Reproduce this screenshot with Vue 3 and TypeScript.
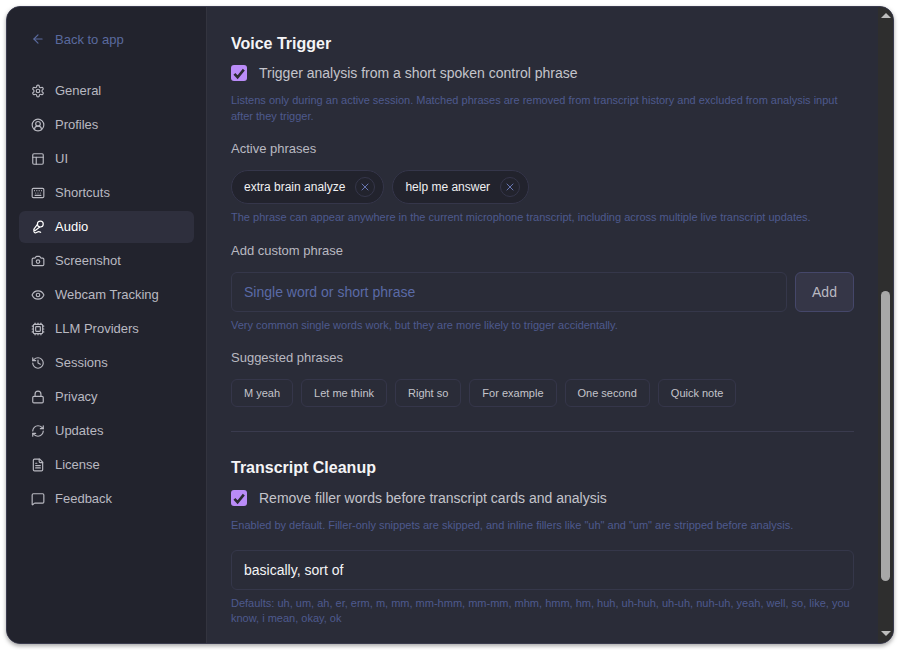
<script setup lang="ts">
import { ref } from 'vue'

interface NavItem { label: string; paths: string[]; active?: boolean }

const circle = (cx: number, cy: number, r: number) =>
  `M${cx - r} ${cy}a${r} ${r} 0 1 0 ${2 * r} 0a${r} ${r} 0 1 0 ${-2 * r} 0`

const nav: NavItem[] = [
  { label: 'General', paths: ['M12.22 2h-.44a2 2 0 0 0-2 2v.18a2 2 0 0 1-1 1.73l-.43.25a2 2 0 0 1-2 0l-.15-.08a2 2 0 0 0-2.73.73l-.22.38a2 2 0 0 0 .73 2.73l.15.1a2 2 0 0 1 1 1.72v.51a2 2 0 0 1-1 1.74l-.15.09a2 2 0 0 0-.73 2.73l.22.38a2 2 0 0 0 2.73.73l.15-.08a2 2 0 0 1 2 0l.43.25a2 2 0 0 1 1 1.73V20a2 2 0 0 0 2 2h.44a2 2 0 0 0 2-2v-.18a2 2 0 0 1 1-1.73l.43-.25a2 2 0 0 1 2 0l.15.08a2 2 0 0 0 2.73-.73l.22-.39a2 2 0 0 0-.73-2.73l-.15-.08a2 2 0 0 1-1-1.74v-.5a2 2 0 0 1 1-1.74l.15-.09a2 2 0 0 0 .73-2.73l-.22-.38a2 2 0 0 0-2.73-.73l-.15.08a2 2 0 0 1-2 0l-.43-.25a2 2 0 0 1-1-1.73V4a2 2 0 0 0-2-2z', circle(12, 12, 3)] },
  { label: 'Profiles', paths: ['M18 20a6 6 0 0 0-12 0', circle(12, 10, 4), circle(12, 12, 10)] },
  { label: 'UI', paths: ['M5 3h14a2 2 0 0 1 2 2v14a2 2 0 0 1-2 2H5a2 2 0 0 1-2-2V5a2 2 0 0 1 2-2z', 'M3 9h18', 'M9 21V9'] },
  { label: 'Shortcuts', paths: ['M10 8h.01', 'M12 12h.01', 'M14 8h.01', 'M16 12h.01', 'M18 8h.01', 'M6 8h.01', 'M7 16h10', 'M8 12h.01', 'M4 4h16a2 2 0 0 1 2 2v12a2 2 0 0 1-2 2H4a2 2 0 0 1-2-2V6a2 2 0 0 1 2-2z'] },
  { label: 'Audio', paths: ['m11 7.601-5.994 8.19a1 1 0 0 0 .1 1.298l.817.818a1 1 0 0 0 1.314.087L15.09 12', 'M16.5 21.174C15.5 20.5 14.372 20 13 20c-2.058 0-3.928 2.356-6 2-2.072-.356-2.775-3.369-1.5-4.5', circle(16, 7, 5)] },
  { label: 'Screenshot', paths: ['M13.997 4a2 2 0 0 1 1.76 1.05l.486.9A2 2 0 0 0 18.003 7H20a2 2 0 0 1 2 2v9a2 2 0 0 1-2 2H4a2 2 0 0 1-2-2V9a2 2 0 0 1 2-2h1.997a2 2 0 0 0 1.759-1.048l.489-.904A2 2 0 0 1 10.004 4z', circle(12, 13, 3)] },
  { label: 'Webcam Tracking', paths: ['M2.062 12.348a1 1 0 0 1 0-.696 10.75 10.75 0 0 1 19.876 0 1 1 0 0 1 0 .696 10.75 10.75 0 0 1-19.876 0', circle(12, 12, 3)] },
  { label: 'LLM Providers', paths: ['M12 20v2', 'M12 2v2', 'M17 20v2', 'M17 2v2', 'M2 12h2', 'M2 17h2', 'M2 7h2', 'M20 12h2', 'M20 17h2', 'M20 7h2', 'M7 20v2', 'M7 2v2', 'M6 4h12a2 2 0 0 1 2 2v12a2 2 0 0 1-2 2H6a2 2 0 0 1-2-2V6a2 2 0 0 1 2-2z', 'M9 8h6a1 1 0 0 1 1 1v6a1 1 0 0 1-1 1H9a1 1 0 0 1-1-1V9a1 1 0 0 1 1-1z'] },
  { label: 'Sessions', paths: ['M3 12a9 9 0 1 0 9-9 9.75 9.75 0 0 0-6.74 2.74L3 8', 'M3 3v5h5', 'M12 7v5l4 2'] },
  { label: 'Privacy', paths: ['M5 11h14a2 2 0 0 1 2 2v7a2 2 0 0 1-2 2H5a2 2 0 0 1-2-2v-7a2 2 0 0 1 2-2z', 'M7 11V7a5 5 0 0 1 10 0v4'] },
  { label: 'Updates', paths: ['M3 12a9 9 0 0 1 9-9 9.75 9.75 0 0 1 6.74 2.74L21 8', 'M21 3v5h-5', 'M21 12a9 9 0 0 1-9 9 9.75 9.75 0 0 1-6.74-2.74L3 16', 'M8 16H3v5'] },
  { label: 'License', paths: ['M15 2H6a2 2 0 0 0-2 2v16a2 2 0 0 0 2 2h12a2 2 0 0 0 2-2V7Z', 'M14 2v4a2 2 0 0 0 2 2h4', 'M10 9H8', 'M16 13H8', 'M16 17H8'] },
  { label: 'Feedback', paths: ['M22 17a2 2 0 0 1-2 2H6.828a2 2 0 0 0-1.414.586l-2.202 2.202A.71.71 0 0 1 2 21.286V5a2 2 0 0 1 2-2h16a2 2 0 0 1 2 2z'] },
]
nav[4].active = true

const activePhrases = ['extra brain analyze', 'help me answer']
const suggested = ['M yeah', 'Let me think', 'Right so', 'For example', 'One second', 'Quick note']

const phrase = ref('')
const fillers = ref('basically, sort of')
</script>

<template>
  <div class="stage">
    <div class="window">
      <aside class="sidebar">
        <a class="back">
          <svg class="icon" viewBox="0 0 24 24"><path d="m12 19-7-7 7-7" /><path d="M19 12H5" /></svg>
          <span>Back to app</span>
        </a>
        <nav class="nav">
          <a v-for="item in nav" :key="item.label" class="nav-item" :class="{ active: item.active }">
            <svg class="icon" viewBox="0 0 24 24"><path v-for="d in item.paths" :key="d" :d="d" /></svg>
            <span class="nav-label">{{ item.label }}</span>
          </a>
        </nav>
      </aside>

      <main class="main">
        <section class="section">
          <h2>Voice Trigger</h2>
          <div class="check">
            <span class="box" role="checkbox" aria-checked="true">
              <svg viewBox="0 0 16 16"><path d="M3.4 8.8l3.2 3.4l6.2-7.6" /></svg>
            </span>
            <span>Trigger analysis from a short spoken control phrase</span>
          </div>
          <p class="help first">Listens only during an active session. Matched phrases are removed from transcript history and excluded from analysis input after they trigger.</p>

          <div class="label l-active">Active phrases</div>
          <div class="chips">
            <div v-for="p in activePhrases" :key="p" class="chip">
              <span>{{ p }}</span>
              <button class="chip-x" type="button" aria-label="Remove">
                <svg viewBox="0 0 24 24"><path d="M18 6 6 18" /><path d="m6 6 12 12" /></svg>
              </button>
            </div>
          </div>
          <p class="help h-chips">The phrase can appear anywhere in the current microphone transcript, including across multiple live transcript updates.</p>

          <div class="label l-custom">Add custom phrase</div>
          <div class="add-row">
            <input v-model="phrase" class="field" type="text" placeholder="Single word or short phrase" />
            <button class="add" type="button">Add</button>
          </div>
          <p class="help h-add">Very common single words work, but they are more likely to trigger accidentally.</p>

          <div class="label l-suggest">Suggested phrases</div>
          <div class="suggest">
            <button v-for="s in suggested" :key="s" class="suggest-btn" type="button">{{ s }}</button>
          </div>
        </section>

        <hr class="divider" />

        <section class="section">
          <h2>Transcript Cleanup</h2>
          <div class="check second">
            <span class="box" role="checkbox" aria-checked="true">
              <svg viewBox="0 0 16 16"><path d="M3.4 8.8l3.2 3.4l6.2-7.6" /></svg>
            </span>
            <span>Remove filler words before transcript cards and analysis</span>
          </div>
          <p class="help first">Enabled by default. Filler-only snippets are skipped, and inline fillers like "uh" and "um" are stripped before analysis.</p>
          <input v-model="fillers" class="field full" type="text" />
          <p class="help h-add">Defaults: uh, um, ah, er, erm, m, mm, mm-hmm, mm-mm, mhm, hmm, hm, huh, uh-huh, uh-uh, nuh-uh, yeah, well, so, like, you know, i mean, okay, ok</p>
        </section>
      </main>

      <div class="scrollbar" aria-hidden="true">
        <span class="arrow up"></span>
        <div class="track"><div class="thumb"></div></div>
        <span class="arrow down"></span>
      </div>
    </div>
  </div>
</template>

<style>
html, body { margin: 0; background: #ffffff; }
</style>

<style scoped>
.stage {
  width: 900px;
  height: 650px;
  padding: 6px;
  box-sizing: border-box;
  font-family: "Liberation Sans", Arial, sans-serif;
}
.window {
  display: flex;
  height: 638px;
  box-sizing: border-box;
  border: 1px solid #3a3b4e;
  border-radius: 14px;
  overflow: hidden;
  background: #2a2c38;
  box-shadow: 0 2px 4px rgba(0, 0, 0, 0.35);
}
.sidebar {
  flex: 0 0 200px;
  box-sizing: border-box;
  background: #22232d;
  border-right: 1px solid #33343f;
  padding: 16px 12px 0;
}
.icon {
  width: 14px;
  height: 14px;
  flex: none;
  fill: none;
  stroke: currentColor;
  stroke-width: 2;
  stroke-linecap: round;
  stroke-linejoin: round;
}
.back {
  display: flex;
  align-items: center;
  gap: 10px;
  height: 32px;
  padding-left: 12px;
  font-size: 13px;
  color: #5a6a9e;
}
.nav {
  display: flex;
  flex-direction: column;
  gap: 2px;
  margin-top: 20px;
}
.nav-item {
  display: flex;
  align-items: center;
  gap: 10px;
  height: 32px;
  padding-left: 12px;
  border-radius: 6px;
  font-size: 13px;
  color: #b9b9c1;
}
.nav-label { padding-bottom: 1px; }
.nav-item.active {
  background: #2e2f3d;
  color: #ffffff;
}
.main {
  flex: 1;
  min-width: 0;
  overflow: hidden;
  padding: 27px 24px 0;
}
h2 {
  margin: 0;
  font-size: 16px;
  line-height: 20px;
  font-weight: 700;
  color: #f4f4f6;
}
.check {
  display: flex;
  align-items: center;
  gap: 12px;
  margin-top: 9px;
  height: 20px;
  font-size: 14px;
  color: #c4c4cb;
}
.check.second { margin-top: 10px; }
.box {
  display: block;
  flex: none;
  width: 16px;
  height: 16px;
  border-radius: 3px;
  background: #ba8cf8;
}
.box svg {
  display: block;
  width: 16px;
  height: 16px;
  fill: none;
  stroke: #2b2b33;
  stroke-width: 2.6;
}
.help {
  margin: 0;
  font-size: 11px;
  line-height: 15.4px;
  color: #4e5a8e;
}
.first { margin-top: 10.2px; }
.label {
  font-size: 13px;
  line-height: 16px;
  color: #b9b9c1;
}
.l-active { margin-top: 16.8px; }
.chips {
  display: flex;
  gap: 8px;
  margin-top: 13px;
}
.chip {
  display: flex;
  align-items: center;
  gap: 10px;
  height: 34px;
  box-sizing: border-box;
  padding: 0 8px 0 12px;
  border: 1px solid #35364a;
  border-radius: 17px;
  background: #22232d;
  font-size: 12px;
  color: #f0f0f2;
}
.chip-x {
  display: flex;
  align-items: center;
  justify-content: center;
  width: 20px;
  height: 20px;
  padding: 0;
  border: 1px solid #35364a;
  border-radius: 50%;
  background: transparent;
}
.chip-x svg {
  width: 12px;
  height: 12px;
  flex: none;
  fill: none;
  stroke: #6f7fc0;
  stroke-width: 1.8;
  stroke-linecap: round;
}
.h-chips { margin-top: 6px; }
.l-custom { margin-top: 18px; }
.add-row {
  display: flex;
  gap: 8px;
  margin-top: 13px;
}
.field {
  flex: 1;
  min-width: 0;
  height: 40px;
  box-sizing: border-box;
  padding: 0 12px;
  border: 1px solid #35374a;
  border-radius: 6px;
  background: transparent;
  font: 14px "Liberation Sans", Arial, sans-serif;
  color: #f4f4f6;
  outline: none;
}
.field::placeholder { color: #5a6aa6; opacity: 1; }
.full {
  display: block;
  width: 100%;
  margin-top: 16.8px;
}
.add {
  width: 59px;
  height: 40px;
  padding: 0;
  border: 1px solid #45476a;
  border-radius: 6px;
  background: #353647;
  font: 14px "Liberation Sans", Arial, sans-serif;
  color: #b9b9c1;
}
.h-add { margin-top: 6px; }
.l-suggest { margin-top: 16px; }
.suggest {
  display: flex;
  gap: 8px;
  margin-top: 13px;
}
.suggest-btn {
  height: 28px;
  padding: 0 12px;
  border: 1px solid #35364a;
  border-radius: 6px;
  background: transparent;
  font: 11px "Liberation Sans", Arial, sans-serif;
  color: #c4c4cb;
}
.divider {
  height: 1px;
  margin: 24px 0 26px;
  border: 0;
  background: #3a3b4e;
}
.scrollbar {
  flex: 0 0 15px;
  display: flex;
  flex-direction: column;
  background: #2e2e2e;
}
.arrow {
  flex: 0 0 15px;
  display: flex;
  justify-content: center;
  box-sizing: border-box;
}
.arrow::before {
  content: "";
  width: 0;
  height: 0;
  border-left: 5px solid transparent;
  border-right: 5px solid transparent;
}
.up { align-items: flex-start; padding-top: 6px; }
.up::before { border-bottom: 5px solid #bdbdbd; }
.down { align-items: flex-end; padding-bottom: 7px; }
.down::before { border-top: 5px solid #bdbdbd; }
.track {
  flex: 1;
  padding-top: 269px;
  display: flex;
  justify-content: center;
}
.thumb {
  width: 9px;
  height: 290px;
  border-radius: 5px;
  background: #a8a8a8;
}
</style>
